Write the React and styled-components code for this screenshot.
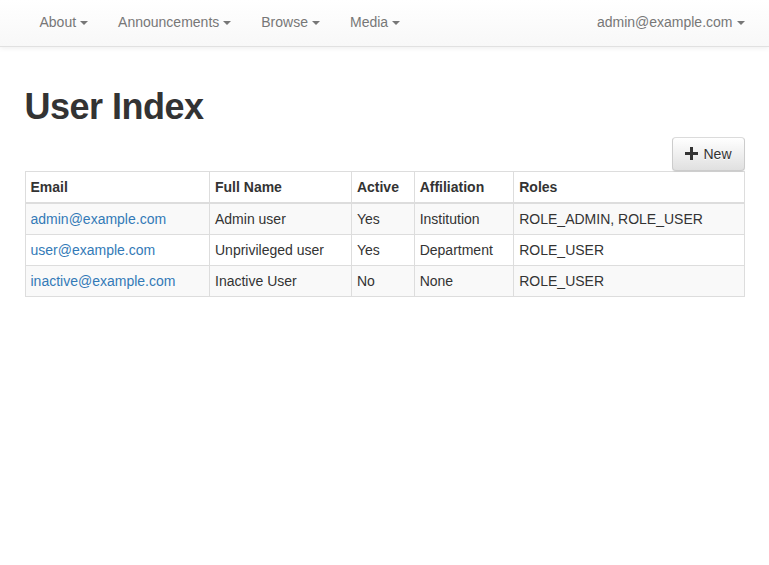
import styled, { createGlobalStyle } from "styled-components";

const GlobalStyle = createGlobalStyle`
  * {
    box-sizing: border-box;
  }
  body {
    margin: 0;
    font-family: "Liberation Sans", Arial, sans-serif;
    font-size: 14px;
    line-height: 1.42857143;
    color: #333;
    background: #fff;
  }
`;

const Navbar = styled.nav`
  background-image: linear-gradient(to bottom, #fff 0, #f8f8f8 100%);
  border-bottom: 1px solid #e1e1e1;
  box-shadow: inset 0 1px 0 rgba(255, 255, 255, 0.15),
    0 1px 5px rgba(0, 0, 0, 0.075);
  margin-bottom: 20px;
`;

const Container = styled.div`
  width: 750px;
  margin: 0 auto;
  padding: 0 15px;
  display: flow-root;
`;

const NavInner = styled.div`
  display: flex;
  justify-content: space-between;
  margin-right: -15px;
`;

const NavList = styled.ul`
  display: flex;
  list-style: none;
  margin: 0;
  padding: 0;
`;

const NavLink = styled.a`
  display: block;
  padding: 12px 15px 14px;
  line-height: 20px;
  color: #777;
  text-decoration: none;
  text-shadow: 0 1px 0 rgba(255, 255, 255, 0.25);
`;

const Caret = styled.span`
  display: inline-block;
  width: 0;
  height: 0;
  margin-left: 4px;
  vertical-align: middle;
  border-top: 4px solid;
  border-right: 4px solid transparent;
  border-left: 4px solid transparent;
`;

const Title = styled.h1`
  font-size: 36px;
  font-weight: bold;
  letter-spacing: -0.5px;
  line-height: 1.1;
  margin: 20px 0 10px;
  color: #333;
`;

const Toolbar = styled.div`
  display: flex;
  justify-content: flex-end;
`;

const Button = styled.button`
  display: inline-flex;
  align-items: center;
  gap: 5px;
  height: 34px;
  padding: 6px 12px;
  font-family: inherit;
  font-size: 14px;
  line-height: 20px;
  color: #333;
  background-image: linear-gradient(to bottom, #fff 0, #e0e0e0 100%);
  border: 1px solid #ccc;
  border-color: #dbdbdb #ccc #ccc;
  border-radius: 4px;
  text-shadow: 0 1px 0 #fff;
  box-shadow: inset 0 1px 0 rgba(255, 255, 255, 0.15),
    0 1px 1px rgba(0, 0, 0, 0.075);
  cursor: pointer;
`;

const Table = styled.table`
  width: 100%;
  border-collapse: collapse;
  border-spacing: 0;
  border: 1px solid #ddd;
  margin-bottom: 20px;
`;

const Th = styled.th`
  text-align: left;
  padding: 5px;
  line-height: 20px;
  border: 1px solid #ddd;
  border-bottom-width: 2px;
  font-weight: bold;
`;

const Row = styled.tr`
  background: ${(p) => (p.$striped ? "#f9f9f9" : "#fff")};
`;

const Td = styled.td`
  padding: 5px;
  line-height: 20px;
  border: 1px solid #ddd;
  vertical-align: top;
`;

const EmailLink = styled.a`
  color: #337ab7;
  text-decoration: none;
`;

const PlusIcon = () => (
  <svg width="13" height="13" viewBox="0 0 13 13" aria-hidden="true">
    <path d="M5 0h3v5h5v3H8v5H5V8H0V5h5z" fill="#333" />
  </svg>
);

const users = [
  {
    email: "admin@example.com",
    name: "Admin user",
    active: "Yes",
    affiliation: "Institution",
    roles: "ROLE_ADMIN, ROLE_USER",
  },
  {
    email: "user@example.com",
    name: "Unprivileged user",
    active: "Yes",
    affiliation: "Department",
    roles: "ROLE_USER",
  },
  {
    email: "inactive@example.com",
    name: "Inactive User",
    active: "No",
    affiliation: "None",
    roles: "ROLE_USER",
  },
];

const menus = ["About", "Announcements", "Browse", "Media"];

export default function App() {
  return (
    <>
      <GlobalStyle />
      <Navbar>
        <Container>
          <NavInner>
            <NavList>
              {menus.map((m) => (
                <li key={m}>
                  <NavLink href="#">
                    {m}
                    <Caret />
                  </NavLink>
                </li>
              ))}
            </NavList>
            <NavList>
              <li>
                <NavLink href="#">
                  admin@example.com
                  <Caret />
                </NavLink>
              </li>
            </NavList>
          </NavInner>
        </Container>
      </Navbar>
      <Container>
        <Title>User Index</Title>
        <Toolbar>
          <Button>
            <PlusIcon />
            New
          </Button>
        </Toolbar>
        <Table>
          <thead>
            <tr>
              <Th>Email</Th>
              <Th>Full Name</Th>
              <Th>Active</Th>
              <Th>Affiliation</Th>
              <Th>Roles</Th>
            </tr>
          </thead>
          <tbody>
            {users.map((u, i) => (
              <Row key={u.email} $striped={i % 2 === 0}>
                <Td>
                  <EmailLink href="#">{u.email}</EmailLink>
                </Td>
                <Td>{u.name}</Td>
                <Td>{u.active}</Td>
                <Td>{u.affiliation}</Td>
                <Td>{u.roles}</Td>
              </Row>
            ))}
          </tbody>
        </Table>
      </Container>
    </>
  );
}
